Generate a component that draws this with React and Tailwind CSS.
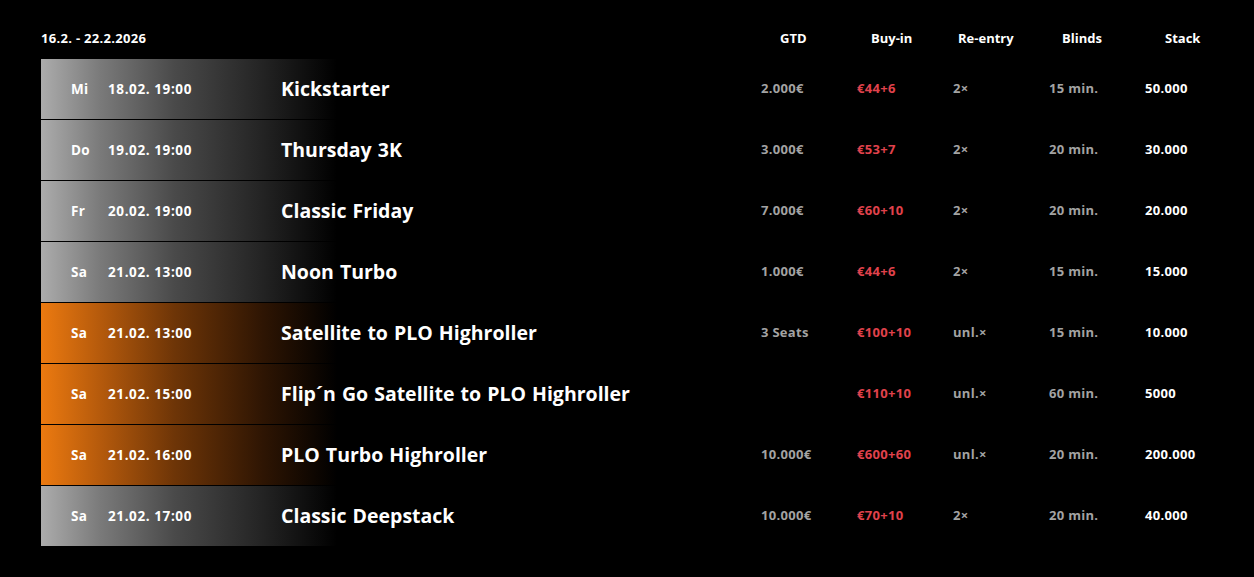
import React from 'react';

const rows = [
    { day: 'Mi', date: '18.02. 19:00', name: 'Kickstarter', gtd: '2.000€', buyin: '€44+6', reentry: '2×', blinds: '15 min.', stack: '50.000' },
    { day: 'Do', date: '19.02. 19:00', name: 'Thursday 3K', gtd: '3.000€', buyin: '€53+7', reentry: '2×', blinds: '20 min.', stack: '30.000' },
    { day: 'Fr', date: '20.02. 19:00', name: 'Classic Friday', gtd: '7.000€', buyin: '€60+10', reentry: '2×', blinds: '20 min.', stack: '20.000' },
    { day: 'Sa', date: '21.02. 13:00', name: 'Noon Turbo', gtd: '1.000€', buyin: '€44+6', reentry: '2×', blinds: '15 min.', stack: '15.000' },
    { day: 'Sa', date: '21.02. 13:00', name: 'Satellite to PLO Highroller', gtd: '3 Seats', buyin: '€100+10', reentry: 'unl.×', blinds: '15 min.', stack: '10.000', hot: true },
    { day: 'Sa', date: '21.02. 15:00', name: 'Flip´n Go Satellite to PLO Highroller', gtd: '', buyin: '€110+10', reentry: 'unl.×', blinds: '60 min.', stack: '5000', hot: true },
    { day: 'Sa', date: '21.02. 16:00', name: 'PLO Turbo Highroller', gtd: '10.000€', buyin: '€600+60', reentry: 'unl.×', blinds: '20 min.', stack: '200.000', hot: true },
    { day: 'Sa', date: '21.02. 17:00', name: 'Classic Deepstack', gtd: '10.000€', buyin: '€70+10', reentry: '2×', blinds: '20 min.', stack: '40.000' },
];

const font = { fontFamily: '"Open Sans", "Liberation Sans", sans-serif' };

const Row = ({ r }) => (
    <div className="relative flex items-center h-[60px]">
        <div
            className={
                'absolute left-0 top-0 h-full w-[296px] ' +
                (r.hot
                    ? 'bg-[linear-gradient(90deg,#ec7a10_0%,#b55a0c_20%,#6e3507_45%,#2e1503_75%,#000_100%)]'
                    : 'bg-[linear-gradient(90deg,#acacac_0%,#7a7a7a_20%,#4a4a4a_45%,#232323_75%,#000_100%)]')
            }
        />
        <div className="relative flex items-center w-full text-[13px] font-bold tracking-[0.3px]">
            <span className="w-[67px] pl-[30px] text-[13.5px] text-white">{r.day}</span>
            <span className="w-[173px] text-[13.5px] tracking-[0.6px] text-white">{r.date}</span>
            <span className="w-[480px] text-[19.5px] font-bold text-white tracking-[0px] [word-spacing:1px]">{r.name}</span>
            <span className="w-[96px] text-[#a3a3a3]">{r.gtd}</span>
            <span className="w-[96px] text-[#e0424c]">{r.buyin}</span>
            <span className="w-[96px] text-[#a3a3a3]">{r.reentry}</span>
            <span className="w-[96px] text-[#a3a3a3]">{r.blinds}</span>
            <span className="w-[96px] text-white">{r.stack}</span>
        </div>
    </div>
);

const App = () => {
    return (
        <div className="min-h-[577px] w-[1254px] bg-black" style={font}>
            <div className="pl-[41px] pt-[29px]">
                <div className="flex items-center h-[20px] text-[13px] font-bold text-white">
                    <span className="w-[720px] tracking-[0.3px]">16.2. - 22.2.2026</span>
                    <span className="w-[96px] pl-[19px]">GTD</span>
                    <span className="w-[96px] pl-[14px]">Buy-in</span>
                    <span className="w-[96px] pl-[5px]">Re-entry</span>
                    <span className="w-[96px] pl-[13px]">Blinds</span>
                    <span className="w-[96px] pl-[20px]">Stack</span>
                </div>
                <div className="mt-[10px] flex flex-col gap-[1px]">
                    {rows.map((r, i) => (
                        <Row key={i} r={r} />
                    ))}
                </div>
            </div>
        </div>
    );
};

export default App;
